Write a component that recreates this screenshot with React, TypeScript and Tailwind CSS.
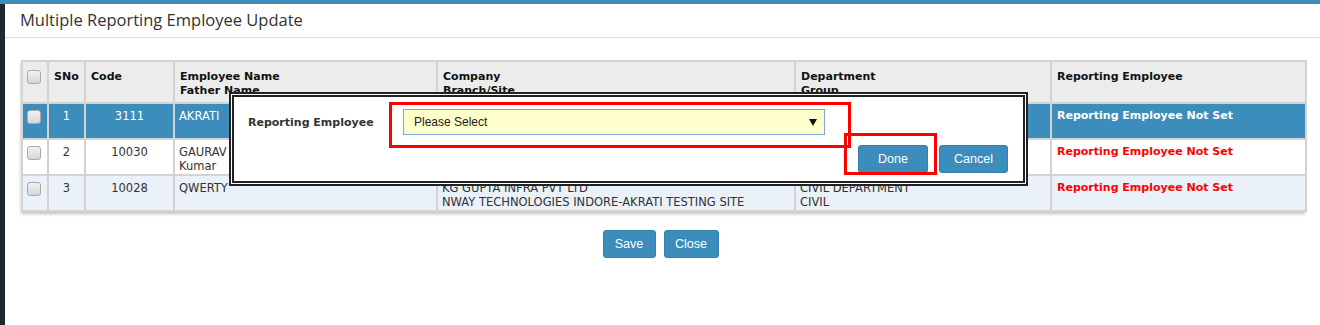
const font = { fontFamily: '"DejaVu Sans", Verdana, sans-serif' };
const arial = { fontFamily: '"Liberation Sans", Arial, sans-serif' };

type Row = {
  sno: string;
  code: string;
  name: string[];
  company: string[];
  dept: string[];
  tone: "active" | "plain" | "alt";
};

const rows: Row[] = [
  {
    sno: "1",
    code: "3111",
    name: ["AKRATI"],
    company: ["KG GUPTA INFRA PVT LTD", "NWAY TECHNOLOGIES INDORE-AKRATI TESTING SITE"],
    dept: ["CIVIL DEPARTMENT", "CIVIL"],
    tone: "active",
  },
  {
    sno: "2",
    code: "10030",
    name: ["GAURAV", "Kumar"],
    company: ["KG GUPTA INFRA PVT LTD", "NWAY TECHNOLOGIES INDORE-AKRATI TESTING SITE"],
    dept: ["CIVIL DEPARTMENT", "CIVIL"],
    tone: "plain",
  },
  {
    sno: "3",
    code: "10028",
    name: ["QWERTY"],
    company: ["KG GUPTA INFRA PVT LTD", "NWAY TECHNOLOGIES INDORE-AKRATI TESTING SITE"],
    dept: ["CIVIL DEPARTMENT", "CIVIL"],
    tone: "alt",
  },
];

function Check() {
  return (
    <span className="block h-[14px] w-[14px] rounded-[3px] border border-[#a9a9a9] bg-gradient-to-b from-[#f2f2f2] to-[#d6d6d6]" />
  );
}

function Btn({ children, className = "" }: { children: string; className?: string }) {
  return (
    <button
      className={`rounded-[3px] border border-[#367fa9] bg-[#3c8dbc] text-[12.5px] text-white ${className}`}
      style={arial}
    >
      {children}
    </button>
  );
}

export default function App() {
  return (
    <div className="flex h-[325px] w-[1320px] flex-col overflow-hidden bg-white">
      <div className="h-[4px] bg-[#3c8dbc]" />
      <div className="flex flex-1">
        <div className="w-[5px] bg-[#1e2a31]" />
        <div className="relative flex-1">
          <div className="flex h-[34px] items-center border-b border-[#dcdcdc] pl-[15px]">
            <h1
              className="text-[16.5px] text-[#333]"
              style={{ fontFamily: '"Open Sans", "Noto Sans", sans-serif' }}
            >
              Multiple Reporting Employee Update
            </h1>
          </div>

          <div className="ml-[16px] mt-[22px] w-[1284px] shadow-[0_2px_3px_rgba(0,0,0,0.25)]">
            <table
              className="w-[1284px] table-fixed border-collapse border border-[#d3d3d3] text-[11.5px] leading-[14px]"
              style={font}
            >
              <colgroup>
                <col className="w-[26px]" />
                <col className="w-[37px]" />
                <col className="w-[89px]" />
                <col className="w-[263px]" />
                <col className="w-[358px]" />
                <col className="w-[256px]" />
                <col className="w-[255px]" />
              </colgroup>
              <thead>
                <tr className="h-[42px] bg-[#ececec] text-left align-top text-[11px] font-bold text-[#111]">
                  <th className="border-2 border-[#d3d3d3] px-[4px] pt-[8px]">
                    <Check />
                  </th>
                  <th className="border-2 border-[#d3d3d3] px-[5px] pt-[8px]">SNo</th>
                  <th className="border-2 border-[#d3d3d3] px-[5px] pt-[8px]">Code</th>
                  <th className="border-2 border-[#d3d3d3] px-[5px] pt-[8px]">
                    Employee Name
                    <br />
                    Father Name
                  </th>
                  <th className="border-2 border-[#d3d3d3] px-[5px] pt-[8px]">
                    Company
                    <br />
                    Branch/Site
                  </th>
                  <th className="border-2 border-[#d3d3d3] px-[5px] pt-[8px]">
                    Department
                    <br />
                    Group
                  </th>
                  <th className="border-2 border-[#d3d3d3] px-[5px] pt-[8px]">Reporting Employee</th>
                </tr>
              </thead>
              <tbody>
                {rows.map((r) => {
                  const bg =
                    r.tone === "active"
                      ? "bg-[#3c8dbc] text-white"
                      : r.tone === "alt"
                        ? "bg-[#eaf1f9] text-[#333]"
                        : "bg-white text-[#333]";
                  return (
                    <tr key={r.sno} className={`h-[36px] align-top ${bg}`}>
                      <td className="border-2 border-[#d3d3d3] px-[4px] pt-[6px]">
                        <Check />
                      </td>
                      <td className="border-2 border-[#d3d3d3] pt-[5px] text-center">{r.sno}</td>
                      <td className="border-2 border-[#d3d3d3] pt-[5px] text-center">{r.code}</td>
                      <td className="border-2 border-[#d3d3d3] px-[4px] pt-[5px]">
                        {r.name.map((n) => (
                          <div key={n}>{n}</div>
                        ))}
                      </td>
                      <td className="border-2 border-[#d3d3d3] px-[4px] pt-[5px]">
                        {r.company.map((n) => (
                          <div key={n}>{n}</div>
                        ))}
                      </td>
                      <td className="border-2 border-[#d3d3d3] px-[4px] pt-[5px]">
                        {r.dept.map((n) => (
                          <div key={n}>{n}</div>
                        ))}
                      </td>
                      <td
                        className={`border-2 border-[#d3d3d3] px-[5px] pt-[5px] text-[11px] font-bold ${
                          r.tone === "active" ? "text-white" : "text-[#ff0000]"
                        }`}
                      >
                        Reporting Employee Not Set
                      </td>
                    </tr>
                  );
                })}
              </tbody>
            </table>
          </div>

          <div className="mt-[18px] flex justify-center gap-[8px] pr-[4px]">
            <Btn className="h-[28px] w-[53px]">Save</Btn>
            <Btn className="h-[28px] w-[55px]">Close</Btn>
          </div>

          {/* popup */}
          <div className="absolute left-[224px] top-[88px] h-[94px] w-[799px] border-[5px] border-double border-[#222] bg-white">
            <div className="relative flex h-full flex-col pl-[14px] pr-[15px] pt-[12px]" style={font}>
              <div className="flex items-center">
                <div className="w-[155px] pt-[2px] text-[11px] font-bold text-[#333]">Reporting Employee</div>
                <div
                  className="flex h-[26px] w-[422px] items-center justify-between border border-[#7fa7e0] bg-[#ffffcc] pl-[10px] pr-[7px] text-[12px] text-[#222]"
                  style={arial}
                >
                  <span>Please Select</span>
                  <svg width="8" height="7" viewBox="0 0 8 7">
                    <path d="M0 0h8L4 7z" fill="#111" />
                  </svg>
                </div>
              </div>
              <div className="mt-[10px] flex justify-end gap-[11px]">
                <Btn className="h-[28px] w-[70px]">Done</Btn>
                <Btn className="h-[28px] w-[69px]">Cancel</Btn>
              </div>
              <div className="absolute left-[155px] top-[5px] h-[46px] w-[462px] border-[3px] border-[#ff0000]" />
              <div className="absolute left-[610px] top-[36px] h-[42px] w-[93px] border-[3px] border-[#ff0000]" />
            </div>
          </div>
        </div>
      </div>
    </div>
  );
}
